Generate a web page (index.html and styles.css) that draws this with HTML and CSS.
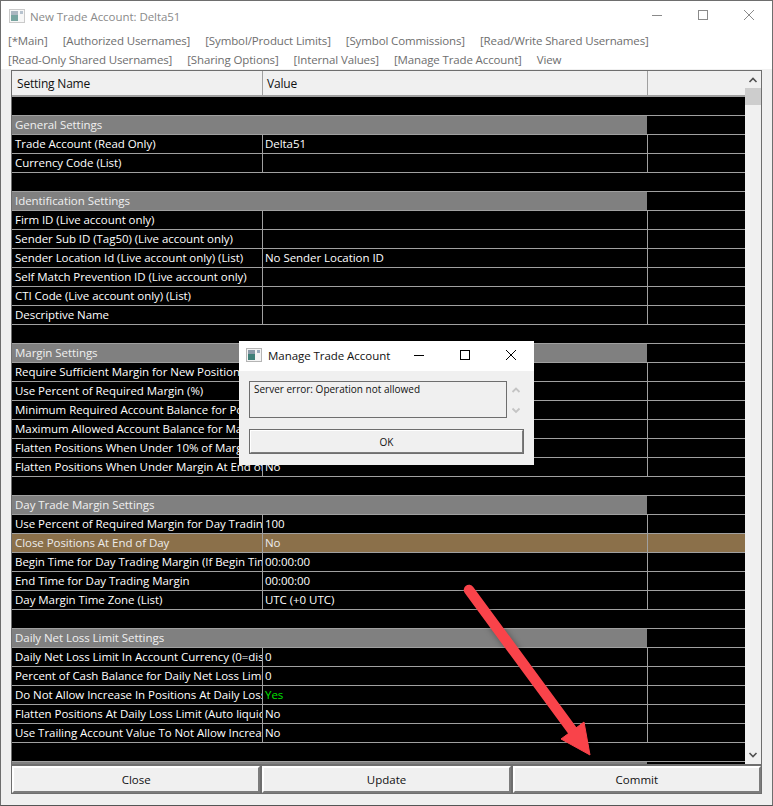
FILE: index.html
```html
<!DOCTYPE html>
<html lang="en">
<head>
<meta charset="utf-8">
<title>New Trade Account: Delta51</title>
<link rel="stylesheet" href="styles.css">
</head>
<body>
<div class="window">
  <div class="titlebar">
    <svg class="appicon faded" width="16" height="14" viewBox="0 0 16 14"><rect x="0.5" y="0.5" width="15" height="13" fill="#f4f4f4" stroke="#b5b5b5"/><rect x="2" y="2" width="7" height="10" fill="#3f7f78"/><rect x="2" y="2" width="7" height="4" fill="#8a9aa8"/><rect x="11" y="2" width="3" height="3" fill="#9ab"/></svg>
    <span class="title">New Trade Account: Delta51</span>
    <div class="caption">
      <svg width="46" height="30" viewBox="0 0 46 30"><path d="M18 14.500h10" stroke="#8a8a8a" fill="none"/></svg>
      <svg width="46" height="30" viewBox="0 0 46 30"><rect x="18.500" y="9.500" width="9" height="9" stroke="#8a8a8a" fill="none"/></svg>
      <svg width="46" height="30" viewBox="0 0 46 30"><path d="M18 9l10 10M28 9l-10 10" stroke="#8a8a8a" fill="none"/></svg>
    </div>
  </div>
  <div class="menu">
    <div class="menu-line"><span>[*Main]</span><span>[Authorized Usernames]</span><span>[Symbol/Product Limits]</span><span>[Symbol Commissions]</span><span>[Read/Write Shared Usernames]</span></div>
    <div class="menu-line"><span>[Read-Only Shared Usernames]</span><span>[Sharing Options]</span><span>[Internal Values]</span><span>[Manage Trade Account]</span><span>View</span></div>
  </div>
  <div class="frame">
    <div class="top">
      <div class="grid">
        <div class="head">
          <div class="hcell name">Setting Name</div>
          <div class="hcell value">Value</div>
          <div class="hcell rest"></div>
        </div>
        <div class="table">
          <div class="row blank"></div>
          <div class="row section"><div class="sec">General Settings</div></div>
          <div class="row"><div class="c1">Trade Account (Read Only)</div><div class="c2">Delta51</div><div class="c3"></div></div>
          <div class="row"><div class="c1">Currency Code (List)</div><div class="c2"></div><div class="c3"></div></div>
          <div class="row blank"></div>
          <div class="row section"><div class="sec">Identification Settings</div></div>
          <div class="row"><div class="c1">Firm ID (Live account only)</div><div class="c2"></div><div class="c3"></div></div>
          <div class="row"><div class="c1">Sender Sub ID (Tag50) (Live account only)</div><div class="c2"></div><div class="c3"></div></div>
          <div class="row"><div class="c1">Sender Location Id (Live account only) (List)</div><div class="c2">No Sender Location ID</div><div class="c3"></div></div>
          <div class="row"><div class="c1">Self Match Prevention ID (Live account only)</div><div class="c2"></div><div class="c3"></div></div>
          <div class="row"><div class="c1">CTI Code (Live account only) (List)</div><div class="c2"></div><div class="c3"></div></div>
          <div class="row"><div class="c1">Descriptive Name</div><div class="c2"></div><div class="c3"></div></div>
          <div class="row blank"></div>
          <div class="row section"><div class="sec">Margin Settings</div></div>
          <div class="row"><div class="c1">Require Sufficient Margin for New Positions</div><div class="c2"></div><div class="c3"></div></div>
          <div class="row"><div class="c1">Use Percent of Required Margin (%)</div><div class="c2"></div><div class="c3"></div></div>
          <div class="row"><div class="c1">Minimum Required Account Balance for Positions</div><div class="c2"></div><div class="c3"></div></div>
          <div class="row"><div class="c1">Maximum Allowed Account Balance for Margin</div><div class="c2"></div><div class="c3"></div></div>
          <div class="row"><div class="c1">Flatten Positions When Under 10% of Margin</div><div class="c2"></div><div class="c3"></div></div>
          <div class="row"><div class="c1">Flatten Positions When Under Margin At End of Day</div><div class="c2">No</div><div class="c3"></div></div>
          <div class="row blank"></div>
          <div class="row section"><div class="sec">Day Trade Margin Settings</div></div>
          <div class="row"><div class="c1">Use Percent of Required Margin for Day Trading (%)</div><div class="c2">100</div><div class="c3"></div></div>
          <div class="row hilite"><div class="c1">Close Positions At End of Day</div><div class="c2">No</div><div class="c3"></div></div>
          <div class="row"><div class="c1">Begin Time for Day Trading Margin (If Begin Time)</div><div class="c2">00:00:00</div><div class="c3"></div></div>
          <div class="row"><div class="c1">End Time for Day Trading Margin</div><div class="c2">00:00:00</div><div class="c3"></div></div>
          <div class="row"><div class="c1">Day Margin Time Zone (List)</div><div class="c2">UTC (+0 UTC)</div><div class="c3"></div></div>
          <div class="row blank"></div>
          <div class="row section"><div class="sec">Daily Net Loss Limit Settings</div></div>
          <div class="row"><div class="c1">Daily Net Loss Limit In Account Currency (0=disabled)</div><div class="c2">0</div><div class="c3"></div></div>
          <div class="row"><div class="c1">Percent of Cash Balance for Daily Net Loss Limit</div><div class="c2">0</div><div class="c3"></div></div>
          <div class="row"><div class="c1">Do Not Allow Increase In Positions At Daily Loss Limit</div><div class="c2 yes">Yes</div><div class="c3"></div></div>
          <div class="row"><div class="c1">Flatten Positions At Daily Loss Limit (Auto liquidate)</div><div class="c2">No</div><div class="c3"></div></div>
          <div class="row"><div class="c1">Use Trailing Account Value To Not Allow Increase</div><div class="c2">No</div><div class="c3"></div></div>
          <div class="row blank"></div>
          <div class="row section"><div class="sec"></div></div>
        </div>
      </div>
      <div class="scrollbar">
        <svg width="16" height="16" viewBox="0 0 16 16"><path d="M4.500 11L8 7.500l3.500 3.500" stroke="#505050" stroke-width="1.600" fill="none"/></svg>
        <div class="thumb"></div>
        <div class="track"></div>
        <svg width="16" height="16" viewBox="0 0 16 16"><path d="M4.500 6L8 9.500 11.500 6" stroke="#505050" stroke-width="1.600" fill="none"/></svg>
      </div>
    </div>
    <div class="buttons">
      <div class="btn">Close</div>
      <div class="btn">Update</div>
      <div class="btn">Commit</div>
    </div>
  </div>
</div>

<div class="dialog">
  <div class="dtitle">
    <svg class="appicon" width="16" height="14" viewBox="0 0 16 14"><rect x="0.5" y="0.5" width="15" height="13" fill="#f4f4f4" stroke="#b5b5b5"/><rect x="2" y="2" width="7" height="10" fill="#3f7f78"/><rect x="2" y="2" width="7" height="4" fill="#8a9aa8"/><rect x="11" y="2" width="3" height="3" fill="#9ab"/></svg>
    <span class="dname">Manage Trade Account</span>
    <div class="dcaption">
      <svg width="46" height="30" viewBox="0 0 46 30"><path d="M18 14.500h10" stroke="#000" fill="none"/></svg>
      <svg width="46" height="30" viewBox="0 0 46 30"><rect x="18.500" y="9.500" width="9" height="9" stroke="#000" fill="none"/></svg>
      <svg width="46" height="30" viewBox="0 0 46 30"><path d="M18 9l10 10M28 9l-10 10" stroke="#000" fill="none"/></svg>
    </div>
  </div>
  <div class="dbody">
    <div class="dmsgrow">
      <div class="dmsg">Server error: Operation not allowed</div>
      <div class="dscroll">
        <svg width="16" height="16" viewBox="0 0 16 16"><path d="M4.500 10L8 6.500l3.500 3.500" stroke="#c4c4c4" stroke-width="1.800" fill="none"/></svg>
        <svg width="16" height="16" viewBox="0 0 16 16"><path d="M4.500 6.500L8 10l3.500-3.500" stroke="#c4c4c4" stroke-width="1.800" fill="none"/></svg>
      </div>
    </div>
    <div class="dok">OK</div>
  </div>
</div>

<svg class="arrow" width="773" height="806" viewBox="0 0 773 806">
  <path d="M469 590L583 745" stroke="#f9434a" stroke-width="10.500" stroke-linecap="round" fill="none"/>
  <polygon points="584,722 590,755 561,739" fill="#f9434a" stroke="#f9434a" stroke-width="1"/>
</svg>
</body>
</html>
```
FILE: styles.css
```css
* { box-sizing: border-box; }
html, body { margin: 0; padding: 0; height: 100%; overflow: hidden; background: #fff; }
body { font-family: "Open Sans", "Noto Sans", sans-serif; font-size: 11.5px; position: relative; }

.window { width: 773px; height: 806px; background: #f0f0f0; border: 1px solid #6e6e6e; border-bottom-color: #555; display: flex; flex-direction: column; }
.titlebar { height: 30px; background: #fff; display: flex; align-items: center; padding-left: 8px; flex: none; }
.appicon.faded { opacity: 0.7; }
.title { margin-left: 5px; color: #8a8a8a; font-size: 11.5px; letter-spacing: -0.05px; white-space: nowrap; }
.caption { margin-left: auto; display: flex; }
.caption svg { display: block; }

.menu { background: #fff; height: 38px; flex: none; padding-left: 7px; color: #6e6e6e; letter-spacing: -0.13px; }
.menu-line { display: flex; gap: 15px; height: 19px; line-height: 19px; white-space: nowrap; }

.frame { margin: 1px 10px 0; width: 751px; height: 724px; border: 1px solid #6e6e6e; display: flex; flex-direction: column; background: #f0f0f0; flex: none; }
.top { height: 693px; display: flex; flex: none; overflow: hidden; }
.grid { width: 733px; flex: none; display: flex; flex-direction: column; overflow: hidden; }
.head { height: 26px; display: flex; background: #f0f0f0; border-bottom: 2px solid #a0a0a0; flex: none; color: #111; font-size: 12px; letter-spacing: -0.2px; }
.hcell { line-height: 26px; border-right: 1px solid #a0a0a0; padding-left: 5px; white-space: nowrap; }
.hcell.name { width: 251px; }
.hcell.value { width: 385px; padding-left: 4px; }
.hcell.rest { border-right: 0; flex: 1; }

.table { flex: 1; background: #000; color: #fff; overflow: hidden; letter-spacing: -0.05px; }
.row { height: 19px; display: flex; border-bottom: 1px solid #a0a0a0; line-height: 18px; white-space: nowrap; }
.row.blank { background: #000; }
.row.hilite { background: #8b704a; color: #ececec; }
.c1 { width: 251px; padding-left: 3px; border-right: 1px solid #a0a0a0; overflow: hidden; flex: none; }
.c2 { width: 385px; padding-left: 2px; border-right: 1px solid #a0a0a0; overflow: hidden; flex: none; }
.c3 { flex: 1; }
.sec { width: 635px; background: #808080; padding-left: 3px; color: #f0f0f0; }
.yes { color: #00e000; }

.scrollbar { flex: 1; display: flex; flex-direction: column; background: #f0f0f0; padding-bottom: 1px; }
.scrollbar svg { display: block; flex: none; }
.thumb { height: 17px; margin-top: 1px; background: #cdcdcd; flex: none; }
.track { flex: 1; }

.buttons { flex: 1; display: flex; gap: 2px; padding-top: 2px; background: #6e6e6e; }
.btn { flex: 1; display: flex; align-items: center; justify-content: center; background: #f0f0f0; border: 2px solid; border-color: #fff #7c7c7c #7c7c7c #fff; color: #111; font-size: 11.500px; }

.dialog { position: absolute; left: 239px; top: 341px; width: 295px; height: 124px; background: #f0f0f0; display: flex; flex-direction: column; }
.dtitle { height: 30px; background: #fff; display: flex; align-items: center; padding-left: 7px; flex: none; }
.dtitle .appicon { margin-bottom: 2px; }
.dname { margin-left: 6px; margin-bottom: 2px; color: #111; font-size: 11.500px; letter-spacing: -0.05px; white-space: nowrap; }
.dcaption { margin-left: auto; display: flex; }
.dcaption svg { display: block; }
.dbody { padding: 10px 10px 0; display: flex; flex-direction: column; gap: 11px; }
.dmsgrow { display: flex; height: 37px; }
.dmsg { width: 258px; border: 1px solid #6e6e6e; padding: 0 4px; font-size: 10px; line-height: 15px; color: #111; white-space: nowrap; }
.dscroll { flex: 1; display: flex; flex-direction: column; justify-content: space-between; align-items: center; padding: 1px 0 0; }
.dscroll svg { display: block; }
.dok { height: 25px; display: flex; align-items: center; justify-content: center; background: #f0f0f0; border: 2px solid; border-color: #fff #7c7c7c #7c7c7c #fff; outline: 1px solid #6e6e6e; outline-offset: -1px; font-size: 10px; color: #111; }

.arrow { position: absolute; left: 0; top: 0; pointer-events: none; filter: drop-shadow(0 0 3px rgba(0, 0, 0, 0.35)); }
```
